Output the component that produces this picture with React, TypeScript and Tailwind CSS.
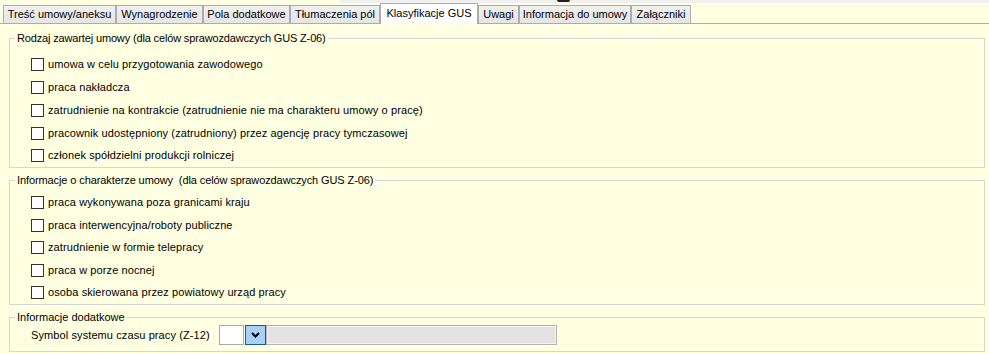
import React from "react";

const tabs = [
  { label: "Treść umowy/aneksu", w: "w-[113px]" },
  { label: "Wynagrodzenie", w: "w-[87px]" },
  { label: "Pola dodatkowe", w: "w-[87px]" },
  { label: "Tłumaczenia pól", w: "w-[90px]" },
  { label: "Klasyfikacje GUS", w: "w-[98px]", active: true },
  { label: "Uwagi", w: "w-[41px]" },
  { label: "Informacja do umowy", w: "w-[112px]" },
  { label: "Załączniki", w: "w-[60px]" },
];

const group1 = [
  { t: "umowa w celu przygotowania zawodowego", h: "h-[23px]" },
  { t: "praca nakładcza", h: "h-[23px]" },
  { t: "zatrudnienie na kontrakcie (zatrudnienie nie ma charakteru umowy o pracę)", h: "h-[23px]" },
  { t: "pracownik udostępniony (zatrudniony) przez agencję pracy tymczasowej", h: "h-[22px]" },
  { t: "członek spółdzielni produkcji rolniczej", h: "h-[23px]" },
];

const group2 = [
  { t: "praca wykonywana poza granicami kraju", h: "h-[23px]" },
  { t: "praca interwencyjna/roboty publiczne", h: "h-[22px]" },
  { t: "zatrudnienie w formie telepracy", h: "h-[23px]" },
  { t: "praca w porze nocnej", h: "h-[22px]" },
  { t: "osoba skierowana przez powiatowy urząd pracy", h: "h-[23px]" },
];

function Row({ t, h }: { t: string; h: string }) {
  return (
    <div className={`flex items-center ${h}`}>
      <span className="w-[13px] h-[13px] border border-[#333333] bg-white shrink-0" />
      <span className="ml-[4px] leading-[13px] whitespace-nowrap tracking-[0.1px]">{t}</span>
    </div>
  );
}

export default function App() {
  return (
    <div
      className="relative w-[989px] h-[354px] overflow-hidden bg-[#ffffe1] text-[11px] text-black"
      style={{ fontFamily: '"Liberation Sans", Arial, sans-serif' }}
    >
      {/* top strip */}
      <div className="flex h-[3px]">
        <div className="w-[340px] bg-[#ffffe1]" />
        <div className="flex-1 bg-[#f0f0f0]" />
      </div>
      <span className="absolute left-[557px] top-0 w-[13px] h-[2px] rounded-b-full bg-[#202020]" />

      {/* tabs */}
      <div className="flex items-end h-[21px] pl-[3px] border-b border-[#acacac]">
        {tabs.map((tab) =>
          tab.active ? (
            <div
              key={tab.label}
              className={`${tab.w} h-[21px] -mb-px flex justify-center pt-[3px] leading-[13px] bg-white border border-b-0 border-[#acacac] whitespace-nowrap relative z-10`}
            >
              {tab.label}
            </div>
          ) : (
            <div
              key={tab.label}
              className={`${tab.w} h-[18px] flex items-center justify-center bg-gradient-to-b from-[#f0f0f0] to-[#e5e5e5] border border-b-0 border-[#acacac] whitespace-nowrap`}
            >
              {tab.label}
            </div>
          )
        )}
      </div>

      {/* group 1 */}
      <fieldset className="ml-[9px] mt-[8px] w-[976px] border border-[#d5d5d5]">
        <legend className="ml-[5px] px-[2px] h-[13px] leading-[13px] whitespace-nowrap tracking-[-0.15px]">
          Rodzaj zawartej umowy (dla celów sprawozdawczych GUS Z-06)
        </legend>
        <div className="pt-[8px] pl-[21px]">
          {group1.map((r) => (
            <Row key={r.t} t={r.t} h={r.h} />
          ))}
        </div>
      </fieldset>

      {/* group 2 */}
      <fieldset className="ml-[9px] mt-[6px] w-[976px] border border-[#d5d5d5]">
        <legend className="ml-[5px] px-[2px] h-[13px] leading-[13px] whitespace-pre tracking-[-0.1px]">
          {"Informacje o charakterze umowy  (dla celów sprawozdawczych GUS Z-06)"}
        </legend>
        <div className="pt-[4px] pl-[21px]">
          {group2.map((r) => (
            <Row key={r.t} t={r.t} h={r.h} />
          ))}
        </div>
      </fieldset>

      {/* group 3 */}
      <fieldset className="ml-[9px] mt-[6px] w-[976px] border border-[#d5d5d5]">
        <legend className="ml-[5px] px-[2px] h-[13px] leading-[13px] whitespace-nowrap">
          Informacje dodatkowe
        </legend>
        <div className="pt-[1px] pb-[6px] pl-[21px] flex items-center">
          <span className="w-[188px] whitespace-nowrap leading-[13px] tracking-[0.1px]">
            Symbol systemu czasu pracy (Z-12)
          </span>
          <div className="w-[25px] h-[20px] bg-white border border-[#a9a9a9]" />
          <div className="ml-[1px] w-[21px] h-[20px] bg-[#a6d1fb] border border-[#1c5a92] flex items-center justify-center">
            <svg width="9" height="6" viewBox="0 0 9 6">
              <polyline points="1,1 4.5,4.5 8,1" fill="none" stroke="#000" strokeWidth="2" />
            </svg>
          </div>
          <div className="w-[291px] h-[20px] bg-[#e3e3e3] border border-[#b4b4b4] shadow-[inset_0_0_0_1px_#f3f3f3]" />
        </div>
      </fieldset>
    </div>
  );
}
